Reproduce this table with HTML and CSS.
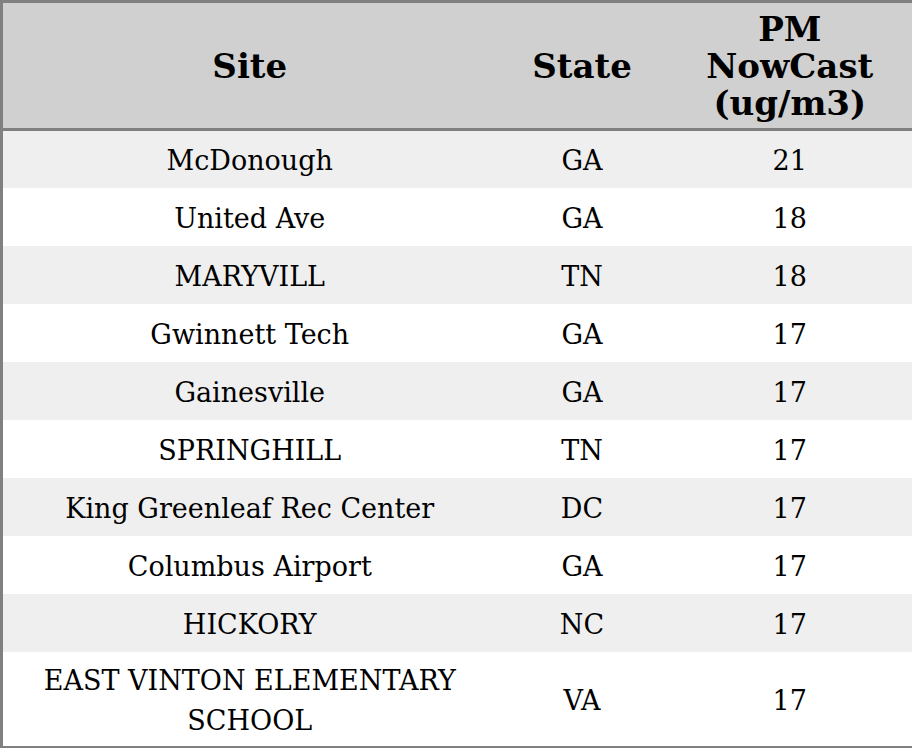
FILE: index.html
```html
<!DOCTYPE html>
<html>
<head>
<meta charset="utf-8">
<link rel="stylesheet" href="styles.css">
</head>
<body>
<table class="aq">
  <colgroup>
    <col class="c-site">
    <col class="c-state">
    <col class="c-pm">
  </colgroup>
  <thead>
    <tr><th>Site</th><th>State</th><th>PM<br>NowCast<br>(ug/m3)</th></tr>
  </thead>
  <tbody>
    <tr><td>McDonough</td><td>GA</td><td>21</td></tr>
    <tr><td>United Ave</td><td>GA</td><td>18</td></tr>
    <tr><td>MARYVILL</td><td>TN</td><td>18</td></tr>
    <tr><td>Gwinnett Tech</td><td>GA</td><td>17</td></tr>
    <tr><td>Gainesville</td><td>GA</td><td>17</td></tr>
    <tr><td>SPRINGHILL</td><td>TN</td><td>17</td></tr>
    <tr><td>King Greenleaf Rec Center</td><td>DC</td><td>17</td></tr>
    <tr><td>Columbus Airport</td><td>GA</td><td>17</td></tr>
    <tr><td>HICKORY</td><td>NC</td><td>17</td></tr>
    <tr><td>EAST VINTON ELEMENTARY SCHOOL</td><td>VA</td><td>17</td></tr>
  </tbody>
</table>
</body>
</html>
```
FILE: styles.css
```css
html, body {
  margin: 0;
  padding: 0;
  background: #ffffff;
}
.aq {
  width: 912px;
  border-collapse: collapse;
  table-layout: fixed;
  border: 3px solid #808080;
  font-family: "DejaVu Serif", serif;
  color: #000;
}
.c-site { width: 495px; }
.c-state { width: 171px; }
.c-pm { width: 246px; }
.aq th {
  background: #d0d0d0;
  font-size: 34px;
  font-weight: bold;
  line-height: 37px;
  padding: 8px 4px 6px;
  text-align: center;
  border-bottom: 3px solid #808080;
}
.aq td {
  font-size: 27px;
  line-height: 40px;
  height: 58px;
  padding: 9px 12px 5px;
  text-align: center;
  vertical-align: middle;
  box-sizing: border-box;
}
.aq tbody tr:nth-child(odd) td {
  background: #efefef;
}
```
